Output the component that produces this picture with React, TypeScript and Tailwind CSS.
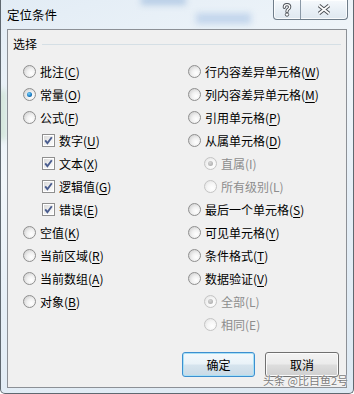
import type { ReactNode } from "react";

type Item = {
  t: string;
  k: string;
  kind: "radio" | "box";
  on?: boolean;
  off?: boolean;
  sub?: boolean;
};

// 左列
const leftItems: Item[] = [
  { t: "批注", k: "C", kind: "radio" },
  { t: "常量", k: "O", kind: "radio", on: true },
  { t: "公式", k: "F", kind: "radio" },
  { t: "数字", k: "U", kind: "box", on: true, sub: true },
  { t: "文本", k: "X", kind: "box", on: true, sub: true },
  { t: "逻辑值", k: "G", kind: "box", on: true, sub: true },
  { t: "错误", k: "E", kind: "box", on: true, sub: true },
  { t: "空值", k: "K", kind: "radio" },
  { t: "当前区域", k: "R", kind: "radio" },
  { t: "当前数组", k: "A", kind: "radio" },
  { t: "对象", k: "B", kind: "radio" },
];

// 右列
const rightItems: Item[] = [
  { t: "行内容差异单元格", k: "W", kind: "radio" },
  { t: "列内容差异单元格", k: "M", kind: "radio" },
  { t: "引用单元格", k: "P", kind: "radio" },
  { t: "从属单元格", k: "D", kind: "radio" },
  { t: "直属", k: "I", kind: "radio", on: true, off: true, sub: true },
  { t: "所有级别", k: "L", kind: "radio", off: true, sub: true },
  { t: "最后一个单元格", k: "S", kind: "radio" },
  { t: "可见单元格", k: "Y", kind: "radio" },
  { t: "条件格式", k: "T", kind: "radio" },
  { t: "数据验证", k: "V", kind: "radio" },
  { t: "全部", k: "L", kind: "radio", on: true, off: true, sub: true },
  { t: "相同", k: "E", kind: "radio", off: true, sub: true },
];

function Radio({ on, off }: { on?: boolean; off?: boolean }) {
  return (
    <span
      className={`relative inline-block h-[13px] w-[13px] shrink-0 rounded-full border ${
        off
          ? "border-[#c4c4c4] bg-[radial-gradient(circle_at_65%_65%,#ffffff_0%,#f6f6f6_45%,#dedede_100%)]"
          : "border-[#8f8f8f] bg-[radial-gradient(circle_at_65%_65%,#ffffff_0%,#f1f1f1_40%,#c6c6c6_100%)]"
      }`}
    >
      {on && (
        <span
          className={`absolute inset-[3px] rounded-full ${
            off
              ? "bg-[radial-gradient(circle_at_40%_35%,#d6d6d6_0%,#a3a3a3_100%)]"
              : "bg-[radial-gradient(circle_at_40%_35%,#7fd3fb_0%,#1c7fc6_55%,#0b3f78_100%)]"
          }`}
        />
      )}
    </span>
  );
}

function Box({ on }: { on?: boolean }) {
  return (
    <span className="relative inline-block h-[13px] w-[13px] shrink-0 border border-[#8f8f8f] bg-white">
      <span className="absolute inset-[1px] bg-gradient-to-br from-[#d9d9d9] via-[#eeeeee] to-[#fbfbfb]" />
      {on && (
        <svg className="absolute inset-0" width="11" height="11" viewBox="0 0 11 11">
          <path d="M2.2 5.4 L4.4 8.2 L8.8 2.2" fill="none" stroke="#4a5d8f" strokeWidth="1.9" />
        </svg>
      )}
    </span>
  );
}

function Row({ it, subPad }: { it: Item; subPad: string }) {
  return (
    <div className={`flex h-[23px] items-center ${it.sub ? subPad : ""}`}>
      {it.kind === "box" ? <Box on={it.on} /> : <Radio on={it.on} off={it.off} />}
      <span className={`ml-[4px] whitespace-nowrap ${it.off ? "text-[#8d8d8d]" : "text-black"}`}>
        {it.t}(<span className={it.off ? "" : "underline underline-offset-[2px]"}>{it.k}</span>)
      </span>
    </div>
  );
}

function Btn({ children, main, w }: { children: ReactNode; main?: boolean; w: string }) {
  return (
    <button
      className={`h-[25px] ${w} rounded-[3px] border text-[12px] text-black ${
        main
          ? "border-[#3c8fd0] shadow-[inset_0_0_0_1px_#a8e0f5] bg-[linear-gradient(#f4f9fc_0%,#e9f2f8_48%,#d6e4ee_52%,#c9dae6_100%)]"
          : "border-[#707070] shadow-[inset_0_0_0_1px_#fbfbfb] bg-[linear-gradient(#f3f3f3_0%,#ebebeb_48%,#dddddd_52%,#cfcfcf_100%)]"
      }`}
    >
      {children}
    </button>
  );
}

export default function App() {
  return (
    <div className="relative h-[394px] w-[354px] overflow-hidden rounded-b-[5px] border-x border-b border-[#5f6870] bg-[linear-gradient(160deg,#e2ecf5_0%,#f1f6fa_35%,#e6eff7_60%,#dde9f3_100%)] font-['Noto_Sans_CJK_SC','Liberation_Sans',sans-serif] text-[12px] leading-[16px]">
      {/* 背景模糊 */}
      <div className="absolute left-[140px] top-[-4px] h-[9px] w-[45px] bg-[#b7cde6] blur-[3px]" />
      <div className="absolute left-[195px] top-[13px] h-[11px] w-[55px] bg-[#c3d6ec] blur-[3px]" />
      <div className="absolute left-[-3px] top-[90px] h-[50px] w-[8px] bg-[#cfe3d6] blur-[3px]" />

      {/* 标题栏 */}
      <div className="relative flex h-[29px] items-center pl-[6px]">
        <span className="text-[12.5px] text-black">定位条件</span>
        <div className="absolute right-[5px] top-0 flex h-[20px] overflow-hidden rounded-b-[4px] border border-t-0 border-[#6f7d8a] bg-[linear-gradient(#f6f9fc_0%,#e9f0f6_50%,#dfe8f0_100%)] shadow-[inset_0_0_0_1px_rgba(255,255,255,0.8)]">
          <div className="flex w-[27px] items-center justify-center border-r border-[#8a98a6]">
            <svg width="10" height="14" viewBox="0 0 10 14">
              <g fill="none" strokeLinecap="round">
                <path d="M2.3 4.3 Q2.3 1.6 5 1.6 Q7.7 1.6 7.7 4 Q7.7 5.6 5.7 6.6 Q5 7 5 8.8" stroke="#4b4f55" strokeWidth="3.2" />
                <path d="M2.3 4.3 Q2.3 1.6 5 1.6 Q7.7 1.6 7.7 4 Q7.7 5.6 5.7 6.6 Q5 7 5 8.8" stroke="#ffffff" strokeWidth="1.4" />
              </g>
              <circle cx="5" cy="11.6" r="1.7" fill="#ffffff" stroke="#4b4f55" strokeWidth="0.9" />
            </svg>
          </div>
          <div className="flex w-[46px] items-center justify-center">
            <svg width="16" height="13" viewBox="0 0 16 13">
              <g fill="none">
                <path d="M3 2.5 L13 10.5 M13 2.5 L3 10.5" stroke="#4b4f55" strokeWidth="3.6" />
                <path d="M3 2.5 L13 10.5 M13 2.5 L3 10.5" stroke="#ffffff" strokeWidth="1.7" />
              </g>
            </svg>
          </div>
        </div>
      </div>

      {/* 客户区 */}
      <div className="relative ml-[6px] flex h-[359px] w-[340px] flex-col border border-[#8c9096] bg-[#f0f0f0]">
        <div className="mt-[6px] flex h-[16px] items-center pl-[5px] pr-[5px]">
          <span className="text-black">选择</span>
          <div className="ml-[5px] h-px flex-1 bg-[#d5dfe5]" />
        </div>

        <div className="mt-[8px] grid grid-cols-[165px_1fr] pl-[15px]">
          <div className="flex flex-col">
            {leftItems.map((it) => (
              <Row key={it.t} it={it} subPad="pl-[19px]" />
            ))}
          </div>
          <div className="flex flex-col">
            {rightItems.map((it) => (
              <Row key={it.t} it={it} subPad="pl-[16px]" />
            ))}
          </div>
        </div>

        <div className="mt-auto flex justify-end gap-[10px] pb-[10px] pr-[7px]">
          <Btn main w="w-[73px]">确定</Btn>
          <Btn w="w-[74px]">取消</Btn>
        </div>
      </div>

      {/* 水印 */}
      <span className="absolute right-[5px] top-[374px] text-[11px] leading-[13px] text-[#7a7a7a] [text-shadow:0_0_2px_#fff,0_0_1px_#fff]">
        头条 @比目鱼2号
      </span>
    </div>
  );
}
